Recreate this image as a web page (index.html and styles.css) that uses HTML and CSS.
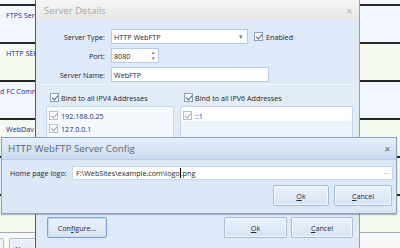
FILE: index.html
```html
<!DOCTYPE html>
<html>
<head>
<meta charset="utf-8">
<link rel="stylesheet" href="styles.css">
</head>
<body>
<div class="bg">
  <div class="strip"></div>
  <div class="row blue"><span class="cell">FTPS Server</span></div>
  <div class="row green"><span class="cell">HTTP SERVER</span></div>
  <div class="row blue"><span class="cell cut">d FC Commands</span></div>
  <div class="row green"><span class="cell">WebDav</span></div>
  <div class="row blue"></div>
  <div class="row green"></div>
  <div class="bottombar">
    <span class="btn bgbtn first"></span>
    <span class="btn bgbtn">New</span>
  </div>
</div>

<div class="win srv">
  <div class="srv-title">
    <span class="ttl">Server Details</span>
    <span class="close">✕</span>
  </div>
  <div class="frame">
    <div class="srv-body">
      <div class="form">
        <div class="frow">
          <label class="lbl">Server Type:</label>
          <div class="input combo">HTTP WebFTP<span class="arrow">▾</span></div>
          <span class="chk on"></span><span class="chk-text">Enabled</span>
        </div>
        <div class="frow">
          <label class="lbl">Port:</label>
          <div class="input port">8080<span class="spin"><i>▴</i><i>▾</i></span></div>
        </div>
        <div class="frow">
          <label class="lbl">Server Name:</label>
          <div class="input name">WebFTP</div>
        </div>
      </div>
      <div class="lists">
        <div class="col c4">
          <div class="bind"><span class="chk on"></span>Bind to all IPV4 Addresses</div>
          <div class="list">
            <div class="item first"><span class="chk gray"></span>192.168.0.25</div>
            <div class="item"><span class="chk gray"></span>127.0.0.1</div>
          </div>
        </div>
        <div class="col c6">
          <div class="bind"><span class="chk on"></span>Bind to all IPV6 Addresses</div>
          <div class="list">
            <div class="item first"><span class="chk gray"></span>::1</div>
          </div>
        </div>
      </div>
      <div class="btnbar">
        <span class="btn focus cfg">Con<u>f</u>igure...</span>
        <span class="spacer"></span>
        <span class="btn okb"><u>O</u>k</span>
        <span class="btn cnb"><u>C</u>ancel</span>
      </div>
    </div>
  </div>
</div>

<div class="win cfgdlg">
  <div class="cfg-title">
    <span class="cttl">HTTP WebFTP Server Config</span>
    <span class="cclose">✕</span>
  </div>
  <div class="cfg-body">
    <div class="crow">
      <label class="clbl">Home page logo:</label>
      <div class="input path">F:\WebSites\example.com\logo<span class="caret"></span>.png<span class="dots">...</span></div>
    </div>
    <div class="cbtns">
      <span class="btn okc"><u>O</u>k</span>
      <span class="btn cnc"><u>C</u>ancel</span>
    </div>
  </div>
</div>
</body>
</html>
```
FILE: styles.css
```css
* { box-sizing: border-box; }
body {
  margin: 0;
  width: 400px;
  height: 248px;
  overflow: hidden;
  position: relative;
  font-family: "Open Sans", "Noto Sans", sans-serif;
  font-size: 7.2px;
  color: #1e1e1e;
  background: #fff;
  white-space: nowrap;
}

/* background grid */
.bg { display: flex; flex-direction: column; height: 248px; }
.strip { height: 4px; background: #f4f8ff; flex: none; }
.row {
  height: 38px;
  border-top: 2px solid #262626;
  padding: 4px 0 0 6px;
  line-height: 10px;
  color: #1c2f88;
  flex: none;
}
.cell { display: block; width: 30px; overflow: hidden; }
.row.blue { background: #f2f7ff; }
.row.green { background: #f4faef; }
.row .cut { margin-left: -6px; width: 36px; }
.bottombar {
  flex: 1;
  border-top: 1px solid #a3a8ae;
  background: #f7f8fa;
  display: flex;
  gap: 5px;
  padding: 5px 0 0 0;
  margin-left: -1px;
}
.bgbtn { width: 27px; height: 18px; color: #1c2f60; }
.bgbtn.first { width: 5px; }

/* generic */
.btn {
  display: inline-flex;
  align-items: center;
  justify-content: center;
  height: 21px;
  border: 1px solid #a9bcd3;
  border-radius: 2px;
  background: linear-gradient(#eaf1fb, #d8e4f3);
  color: #1e2a3a;
  box-shadow: inset 0 0 0 1px #f4f8fd;
}
.btn.focus { border-color: #7fa4cf; box-shadow: inset 0 0 0 1px #c6daf2; }
.input {
  background: #fff;
  border: 1px solid #b9cbe0;
  height: 15px;
  display: flex;
  align-items: center;
  padding-left: 2px;
  position: relative;
  color: #1e1e1e;
}
.chk {
  display: inline-block;
  width: 9px;
  height: 9px;
  border: 1px solid #8e9fb4;
  background: #f9fbfe;
  position: relative;
  flex: none;
}
.chk.on::after, .chk.gray::after {
  content: "";
  position: absolute;
  left: 2px;
  top: 0px;
  width: 3px;
  height: 5px;
  border: solid #4d5f78;
  border-width: 0 1px 1px 0;
  transform: rotate(40deg);
}
.chk.gray { border-color: #b8bfc8; background: #fbfbfb; }
.chk.gray::after { border-color: #a8acb2; }

/* server details window */
.win { position: absolute; }
.srv {
  left: 35px;
  top: 0;
  width: 325px;
  height: 260px;
  border-left: 1px solid #5a5a5a;
  border-right: 1px solid #9a9ea4;
  background: #e4e9f0;
  display: flex;
  flex-direction: column;
}
.srv-title {
  height: 20px;
  flex: none;
  background: linear-gradient(#f5f5f5, #e6e6e6);
  display: flex;
  align-items: center;
  justify-content: space-between;
  padding: 0 6px 0 8px;
}
.ttl { font-size: 9.6px; color: #a9a9a9; }
.close { font-size: 8px; color: #b5b5b5; }
.frame { flex: 1; padding: 0 3px 0 4px; }
.srv-body { background: #dfeaf8; height: 100%; display: flex; flex-direction: column; }
.form {
  height: 65px;
  flex: none;
  padding-top: 9px;
  display: flex;
  flex-direction: column;
  gap: 4px;
  border-bottom: 1px solid #f2f6fc;
}
.frow { display: flex; align-items: center; height: 15px; }
.lbl { width: 66px; text-align: right; padding-right: 1px; margin-right: 5px; color: #1e2430; }
.combo { width: 137px; }
.arrow { position: absolute; right: 4px; top: 2px; font-size: 7px; color: #6a7a8e; }
.chk-text { margin-left: 3px; }
.frow .chk { margin-left: 6px; }
.port { width: 48px; }
.spin { position: absolute; right: 3px; top: 0; display: flex; flex-direction: column; font-size: 5px; line-height: 6px; color: #5a6a80; }
.spin i { font-style: normal; }
.name { width: 158px; }

.lists {
  height: 128px;
  flex: none;
  display: flex;
  gap: 6px;
  padding: 7px 3px 0 6px;
  background: #e2ecf9;
}
.col { display: flex; flex-direction: column; }
.c4 { width: 128px; }
.c6 { flex: 1; }
.bind { display: flex; align-items: center; gap: 2px; height: 11px; padding-left: 4px; margin-bottom: 3px; }
.list {
  height: 100px;
  border: 1px solid #c6d6ea;
  background: #f5f9fd;
  padding: 2px 0 0 2px;
}
.item { display: flex; align-items: center; gap: 3px; height: 13px; color: #1c2f88; }
.c6 .list { background: linear-gradient(#fdfeff 0, #fdfeff 14px, #edf3fb 14px); }

.btnbar { display: flex; padding: 4px 3px 0 7px; gap: 4px; }
.cfg { width: 60px; }
.spacer { flex: 1; }
.okb { width: 63px; }
.cnb { width: 62px; }

/* config dialog */
.cfgdlg {
  left: 1px;
  top: 137px;
  width: 396px;
  height: 77px;
  border: 1px solid #8aa2c0;
  background: #dae6f5;
  display: flex;
  flex-direction: column;
  box-shadow: 0 1px 1px rgba(60,80,110,0.35);
}
.cfg-title {
  height: 22px;
  flex: none;
  background: linear-gradient(#e6eef9, #ccdcf0);
  border-bottom: 1px solid #b7cbe4;
  display: flex;
  align-items: center;
  justify-content: space-between;
  padding: 0 5px 0 6px;
}
.cttl { font-size: 9.8px; color: #5c6878; }
.cclose { font-size: 8px; color: #5f6b7b; }
.cfg-body { flex: 1; padding: 6px 3px 0 8px; background: #dde8f6; }
.crow { display: flex; align-items: center; height: 14px; }
.clbl { width: 62px; color: #1e2430; }
.path { flex: 1; height: 14px; border-color: #c7d6e8; padding-left: 3px; }
.caret { display: inline-block; width: 1px; height: 10px; background: #000; }
.dots { position: absolute; right: 3px; top: 0; color: #a0a8b4; font-size: 7px; }
.cbtns { display: flex; justify-content: flex-end; gap: 5px; margin-top: 5px; padding-right: 1px; }
.okc { width: 56px; }
.cnc { width: 58px; }
```
